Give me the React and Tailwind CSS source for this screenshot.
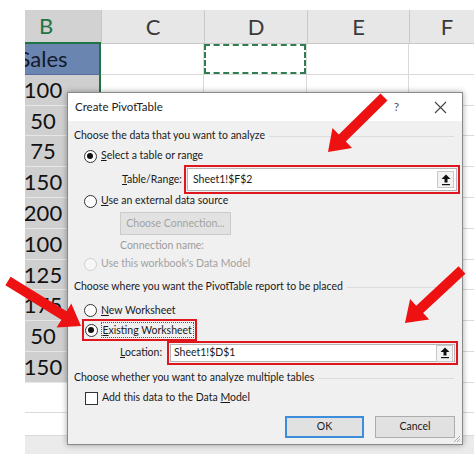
import React from "react";

function arrowPoints(x1, y1, x2, y2, sw = 10, hw = 28, hl = 20) {
  const dx = x2 - x1, dy = y2 - y1, len = Math.hypot(dx, dy);
  const ux = dx / len, uy = dy / len, px = -uy, py = ux;
  const bx = x2 - ux * hl, by = y2 - uy * hl;
  const pts = [
    [x1 + (px * sw) / 2, y1 + (py * sw) / 2],
    [bx + (px * sw) / 2, by + (py * sw) / 2],
    [bx + (px * hw) / 2, by + (py * hw) / 2],
    [x2, y2],
    [bx - (px * hw) / 2, by - (py * hw) / 2],
    [bx - (px * sw) / 2, by - (py * sw) / 2],
    [x1 - (px * sw) / 2, y1 - (py * sw) / 2],
  ];
  return pts.map((p) => p.map((v) => v.toFixed(1)).join(",")).join(" ");
}

const values = ["Sales", "100", "50", "75", "150", "200", "100", "125", "175", "50", "150"];

function Radio({ checked, disabled }) {
  return (
    <div
      className={`w-[13px] h-[13px] rounded-full border flex items-center justify-center shrink-0 ${
        disabled ? "border-[#cfcfcf] bg-[#f7f7f7]" : "border-[#333] bg-white"
      }`}
    >
      {checked && <div className="w-[6px] h-[6px] rounded-full bg-[#111]" />}
    </div>
  );
}

function UploadBtn() {
  return (
    <div className="w-[17px] h-[17px] border border-[#c9c9c9] bg-[#f3f3f3] flex items-center justify-center">
      <svg width="10" height="12" viewBox="0 0 10 12">
        <polygon points="5,0.5 9.5,5 6.5,5 6.5,8.5 3.5,8.5 3.5,5 0.5,5" fill="#111" />
        <rect x="1" y="10" width="8" height="1.2" fill="#111" />
      </svg>
    </div>
  );
}

function GroupHeader({ children, className }) {
  return (
    <div className={`flex items-center pr-[8px] ${className}`}>
      <span className="whitespace-nowrap">{children}</span>
      <div className="flex-1 h-px bg-[#dcdcdc] ml-[4px]" />
    </div>
  );
}

export default function App() {
  return (
    <div className="relative w-[474px] h-[454px] overflow-hidden bg-white font-[Lato,sans-serif]">
      {/* Spreadsheet */}
      <div className="flex flex-col h-full">
        <div className="h-[10px] shrink-0" />
        <div className="flex h-[34px] shrink-0 text-[22px] text-[#3a3a3a]">
          <div className="w-[25px] bg-white" />
          <div className="w-[76px] bg-[#d2d2d2] border-b-2 border-[#217346] text-[#217346] overflow-hidden">
            <div className="w-[110px] ml-[-34px] text-center leading-[32px]">B</div>
          </div>
          <div className="w-[103px] bg-[#e7e7e7] border-l border-[#c9c9c9] border-b border-b-[#c9c9c9] flex items-center justify-center">C</div>
          <div className="w-[103px] bg-[#e7e7e7] border-l border-[#c9c9c9] border-b border-b-[#c9c9c9] flex items-center justify-center">D</div>
          <div className="w-[102px] bg-[#e7e7e7] border-l border-[#c9c9c9] border-b border-b-[#c9c9c9] flex items-center justify-center">E</div>
          <div className="flex-1 bg-[#e7e7e7] border-l border-[#c9c9c9] border-b border-b-[#c9c9c9] flex items-center justify-center pl-[10px]">F</div>
        </div>
        {values.map((v, i) => (
          <div key={i} className="flex h-[30.8px] shrink-0">
            <div className="w-[25px] bg-white" />
            <div
              className={`w-[76px] overflow-hidden border-r-2 border-r-[#217346] text-[22px] ${
                i === 0 ? "bg-[#6b85b1] text-[#111a2c] border-b border-b-[#55709c]" : "bg-[#cfcfcf] text-[#111] border-b border-b-[#e6e6e6]"
              }`}
            >
              <div className="w-[116px] ml-[-40px] text-center leading-[30px]">{v}</div>
            </div>
            <div className="w-[103px] border-r border-b border-[#dadada]" />
            <div className="w-[103px] border-r border-b border-[#dadada] relative">
              {i === 0 && <div className="absolute inset-0 border-2 border-dashed border-[#2f7d51]" />}
            </div>
            <div className="w-[102px] border-r border-b border-[#dadada]" />
            <div className="flex-1 border-b border-[#dadada]" />
          </div>
        ))}
        {[30, 23].map((h, i) => (
          <div key={i} className={`flex shrink-0 ${i === 0 ? "h-[30px]" : "h-[23px]"}`}>
            <div className="w-[25px] bg-white" />
            <div className="w-[76px] border-r border-b border-[#dadada]" />
            <div className="w-[103px] border-r border-b border-[#dadada]" />
            <div className="w-[103px] border-r border-b border-[#dadada]" />
            <div className="w-[102px] border-r border-b border-[#dadada]" />
            <div className="flex-1 border-b border-[#dadada]" />
          </div>
        ))}
        <div className="flex flex-1">
          <div className="w-[25px] bg-white" />
          <div className="flex-1 bg-[#ebebeb]" />
        </div>
      </div>

      {/* Dialog */}
      <div className="absolute left-[67px] top-[92px] w-[396px] h-[353px] border border-[#8a8a8a] bg-[#f0f0f0] shadow-[0_0_6px_rgba(0,0,0,0.35)] font-[Lato,sans-serif] text-[10.5px] text-[#1a1a1a] flex flex-col">
        <div className="h-[28px] bg-white flex items-center pl-[7px] shrink-0">
          <span className="text-[11.5px] text-[#222]">Create PivotTable</span>
          <div className="flex-1" />
          <span className="text-[12px] text-[#555] mr-[35px]">?</span>
          <svg width="13" height="13" viewBox="0 0 13 13" className="mr-[15px]">
            <path d="M1 1 L12 12 M12 1 L1 12" stroke="#444" strokeWidth="1.1" />
          </svg>
        </div>
        <div className="flex flex-col pl-[6px] pt-[4px]">
          <GroupHeader className="h-[22px]">Choose the data that you want to analyze</GroupHeader>
          <div className="h-[18px] flex items-center pl-[9.5px] gap-[4.5px]">
            <Radio checked />
            <span>
              <u>S</u>elect a table or range
            </span>
          </div>
          <div className="h-[29px] flex items-center pl-[45px]">
            <span className="w-[63px] text-right whitespace-nowrap">
              <u>T</u>able/Range:
            </span>
            <div className="ml-[2px] w-[276px] h-[29px] border-2 border-[#e0161e] p-px">
              <div className="h-full bg-white border border-[#b5b5b5] flex items-center pl-[5px] pr-[2px]">
                <span className="flex-1">Sheet1!$F$2</span>
                <UploadBtn />
              </div>
            </div>
          </div>
          <div className="h-[14px] flex items-center pl-[9.5px] gap-[4.5px]">
            <Radio />
            <span>
              <u>U</u>se an external data source
            </span>
          </div>
          <div className="h-[28px] pt-[4px] pl-[46px]">
            <div className="w-[111px] h-[23px] bg-[#e2e2e2] border border-[#cbcbcb] text-[#a2a2a2] flex items-center justify-center">
              Choose Connection...
            </div>
          </div>
          <div className="h-[20px] flex items-center pl-[46px] text-[#9c9c9c]">Connection name:</div>
          <div className="h-[16px] flex items-center pl-[9.5px] gap-[4.5px] text-[#a2a2a2]">
            <Radio disabled />
            <span>Use this workbook's Data Model</span>
          </div>
          <GroupHeader className="h-[30px]">Choose where you want the PivotTable report to be placed</GroupHeader>
          <div className="h-[17px] flex items-center pl-[9.5px] gap-[4.5px]">
            <Radio />
            <span>
              <u>N</u>ew Worksheet
            </span>
          </div>
          <div className="h-[22px] flex items-center pl-[8px]">
            <div className="h-[22px] border-2 border-[#e0161e] flex items-center pl-[0.5px] pr-px gap-[3px]">
              <Radio checked />
              <span className="border border-dotted border-[#555] px-px leading-[14px]">
                <u>E</u>xisting Worksheet
              </span>
            </div>
          </div>
          <div className="h-[24px] flex items-center pl-[46px]">
            <span className="w-[47px] whitespace-nowrap">
              <u>L</u>ocation:
            </span>
            <div className="w-[291px] h-[24px] border-2 border-[#e0161e] p-px">
              <div className="h-full bg-white border border-[#b5b5b5] flex items-center pl-[3px] pr-[1px]">
                <span className="flex-1">Sheet1!$D$1</span>
                <UploadBtn />
              </div>
            </div>
          </div>
          <GroupHeader className="h-[26px]">Choose whether you want to analyze multiple tables</GroupHeader>
          <div className="h-[14px] flex items-center pl-[11px] gap-[4px]">
            <div className="w-[13px] h-[13px] border border-[#333] bg-white" />
            <span>
              Add this data to the Data <u>M</u>odel
            </span>
          </div>
          <div className="h-[33px] pt-[11px] flex justify-end pr-[7px] gap-[11px]">
            <div className="w-[79px] h-[22px] bg-[#e1e1e1] border-2 border-[#3c8ddb] flex items-center justify-center">OK</div>
            <div className="w-[80px] h-[22px] bg-[#e1e1e1] border border-[#adadad] flex items-center justify-center">Cancel</div>
          </div>
        </div>
        <svg width="8" height="8" viewBox="0 0 8 8" className="absolute right-[1px] bottom-[1px]">
          <path d="M7 1 L1 7 M7 4 L4 7 M7 6.5 L6.5 7" stroke="#aaa" strokeWidth="1" />
        </svg>
      </div>

      {/* Arrows */}
      <svg className="absolute inset-0 pointer-events-none" width="474" height="454">
        <polygon points={arrowPoints(384, 97, 328, 152, 10, 28, 20)} fill="#ee1111" />
        <polygon points={arrowPoints(8, 281, 81, 326, 10, 28, 20)} fill="#ee1111" />
        <polygon points={arrowPoints(462, 270, 405, 323, 10, 28, 20)} fill="#ee1111" />
      </svg>
    </div>
  );
}
